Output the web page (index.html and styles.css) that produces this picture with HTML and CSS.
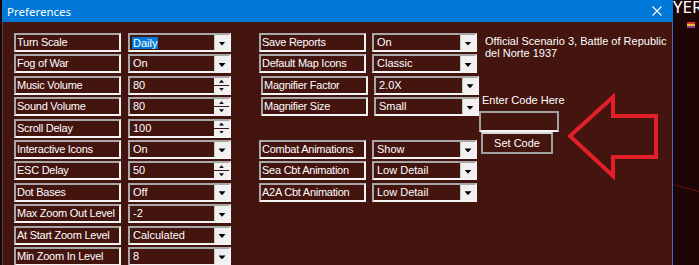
FILE: index.html
```html
<!DOCTYPE html>
<html>
<head>
<meta charset="utf-8">
<link rel="stylesheet" href="styles.css">
</head>
<body>
<div class="screen">
  <div class="window">
    <div class="titlebar">
      <span class="title">Preferences</span>
      <svg class="close" width="10" height="10" viewBox="0 0 10 10"><path d="M0.5 0.5 L9.5 9.5 M9.5 0.5 L0.5 9.5" stroke="#fff" stroke-width="1.1" fill="none"/></svg>
    </div>
    <div class="content">
      <div class="group group-a">
        <div class="box label">Turn Scale</div>
        <div class="box field"><span class="val sel">Daily</span><span class="drop"><i></i></span></div>
        <div class="box label">Fog of War</div>
        <div class="box field"><span class="val">On</span><span class="drop"><i></i></span></div>
        <div class="box label">Music Volume</div>
        <div class="box field"><span class="val">80</span><span class="spin"><b class="up"><i></i></b><b class="dn"><i></i></b></span></div>
        <div class="box label">Sound Volume</div>
        <div class="box field"><span class="val">80</span><span class="spin"><b class="up"><i></i></b><b class="dn"><i></i></b></span></div>
        <div class="box label">Scroll Delay</div>
        <div class="box field"><span class="val">100</span><span class="spin"><b class="up"><i></i></b><b class="dn"><i></i></b></span></div>
        <div class="box label">Interactive Icons</div>
        <div class="box field"><span class="val">On</span><span class="drop"><i></i></span></div>
        <div class="box label">ESC Delay</div>
        <div class="box field"><span class="val">50</span><span class="spin"><b class="up"><i></i></b><b class="dn"><i></i></b></span></div>
        <div class="box label">Dot Bases</div>
        <div class="box field"><span class="val">Off</span><span class="drop"><i></i></span></div>
        <div class="box label">Max Zoom Out Level</div>
        <div class="box field"><span class="val">-2</span><span class="drop"><i></i></span></div>
        <div class="box label">At Start Zoom Level</div>
        <div class="box field"><span class="val">Calculated</span><span class="drop"><i></i></span></div>
        <div class="box label">Min Zoom In Level</div>
        <div class="box field"><span class="val">8</span><span class="drop"><i></i></span></div>
      </div>
      <div class="group group-b">
        <div class="box label">Save Reports</div>
        <div class="box field"><span class="val">On</span><span class="drop"><i></i></span></div>
        <div class="box label">Default Map Icons</div>
        <div class="box field"><span class="val">Classic</span><span class="drop"><i></i></span></div>
        <div class="box label shift">Magnifier Factor</div>
        <div class="box field shift"><span class="val">2.0X</span><span class="drop"><i></i></span></div>
        <div class="box label shift">Magnifier Size</div>
        <div class="box field shift"><span class="val">Small</span><span class="drop"><i></i></span></div>
        <div class="spacer"></div>
        <div class="box label">Combat Animations</div>
        <div class="box field"><span class="val">Show</span><span class="drop"><i></i></span></div>
        <div class="box label">Sea Cbt Animation</div>
        <div class="box field"><span class="val">Low Detail</span><span class="drop"><i></i></span></div>
        <div class="box label">A2A Cbt Animation</div>
        <div class="box field"><span class="val">Low Detail</span><span class="drop"><i></i></span></div>
      </div>
      <div class="side">
        <p class="scenario">Official Scenario 3, Battle of Republic<br>del Norte 1937</p>
        <div class="code-label">Enter Code Here</div>
        <div class="code-input"></div>
        <div class="code-btn">Set Code</div>
        <svg class="arrow" width="94" height="87" viewBox="0 0 94 87"><polygon points="4,43 47,4 47,23 90,23 90,64 47,64 47,83" fill="none" stroke="#e3202a" stroke-width="4" stroke-linejoin="miter"/></svg>
      </div>
    </div>
  </div>
  <div class="outside">
    <span class="yer">YER</span>
    <span class="flag"></span>
    <span class="streak"></span>
  </div>
</div>
</body>
</html>
```
FILE: styles.css
```css
html, body {
  margin: 0;
  padding: 0;
}
body {
  background: #1d0606;
  font-family: "Liberation Sans", Arial, sans-serif;
  font-size: 11px;
  color: #fff;
}
.screen {
  display: flex;
  height: 265px;
  overflow: hidden;
}
.window {
  margin-left: 2px;
  width: 671px;
  flex: none;
  display: flex;
  flex-direction: column;
}
.titlebar {
  height: 22px;
  background: #0078d7;
  display: flex;
  align-items: center;
  padding-left: 5px;
  box-sizing: border-box;
  flex: none;
}
.title {
  font-family: "Noto Sans", "Liberation Sans", sans-serif;
  font-size: 11.5px;
  color: #fff;
}
.close {
  margin-left: auto;
  margin-right: 11px;
}
.content {
  flex: 1;
  background: #44140f;
  border-left: 1px solid #4a4450;
  border-right: 1px solid #3d6fc2;
  display: flex;
  align-items: flex-start;
  padding: 11px 0 0 11px;
}
.group {
  display: grid;
  grid-auto-rows: 19px;
  row-gap: 2.4px;
}
.group-a {
  grid-template-columns: 107px 103px;
  column-gap: 7px;
}
.group-b {
  grid-template-columns: 107px 105px;
  column-gap: 6px;
  margin-left: 28px;
}
.spacer {
  grid-column: span 2;
}
.box {
  box-sizing: border-box;
  height: 19px;
  border: 2px solid;
  border-color: #a8a8a8 #f4f4f4 #f4f4f4 #a8a8a8;
  line-height: 15px;
  white-space: nowrap;
  overflow: hidden;
}
.label {
  padding-left: 1px;
  letter-spacing: -0.25px;
}
.shift {
  margin-left: 2px;
  margin-right: -2px;
}
.field {
  display: flex;
  align-items: stretch;
  padding-left: 3px;
}
.val {
  display: block;
}
.sel {
  align-self: center;
  background: #0078d7;
  line-height: 12px;
  padding: 0 1px;
  margin-left: -1px;
}
.drop {
  margin-left: auto;
  width: 15px;
  box-sizing: border-box;
  background: #f0f0f0;
  border-left: 1px solid #c8c8c8;
  display: flex;
  align-items: center;
  justify-content: center;
}
.drop i {
  display: block;
  width: 7px;
  height: 4px;
  background: #000;
  clip-path: polygon(0 0, 100% 0, 50% 100%);
  margin-top: 2px;
}
.spin {
  margin-left: auto;
  width: 15px;
  display: flex;
  flex-direction: column;
  justify-content: space-between;
}
.spin b {
  height: 7px;
  background: #f0f0f0;
  display: flex;
  align-items: center;
  justify-content: center;
}
.spin i {
  display: block;
  width: 5px;
  height: 3px;
  background: #000;
}
.spin .up i {
  clip-path: polygon(50% 0, 100% 100%, 0 100%);
}
.spin .dn i {
  clip-path: polygon(0 0, 100% 0, 50% 100%);
}
.side {
  position: relative;
  margin-left: 2px;
  display: flex;
  flex-direction: column;
  align-items: flex-start;
}
.scenario {
  margin: 0 0 0 6px;
  line-height: 12px;
  padding-top: 2px;
}
.code-label {
  margin: 35px 0 0 3px;
  line-height: 13px;
}
.code-input {
  margin-top: 4px;
  width: 80px;
  height: 21px;
  box-sizing: border-box;
  border: 2px solid;
  border-color: #a0a0a0 #a0a0a0 #f4f4f4 #a0a0a0;
}
.code-btn {
  margin-left: 2px;
  width: 72px;
  height: 22px;
  box-sizing: border-box;
  border: 2px solid #a0a0a0;
  border-top-color: #d8d8d8;
  text-align: center;
  line-height: 18px;
}
.arrow {
  position: absolute;
  left: 87px;
  top: 60px;
}
.outside {
  flex: 1;
  position: relative;
  overflow: hidden;
  background: #1e0606;
  display: flex;
  flex-direction: column;
}
.yer {
  font-family: "Noto Sans", "Liberation Sans", sans-serif;
  font-size: 17px;
  line-height: 18px;
  margin-top: -2px;
  color: #fff;
  white-space: nowrap;
}
.flag {
  width: 8px;
  height: 6px;
  margin: 6px 0 0 14px;
  background: linear-gradient(#d83a2a 0 33%, #e8c020 33% 66%, #8a3aa0 66%);
}
.streak {
  position: absolute;
  left: 0;
  top: 188px;
  width: 30px;
  height: 1px;
  background: #6a1010;
  transform: rotate(15deg);
}
```
